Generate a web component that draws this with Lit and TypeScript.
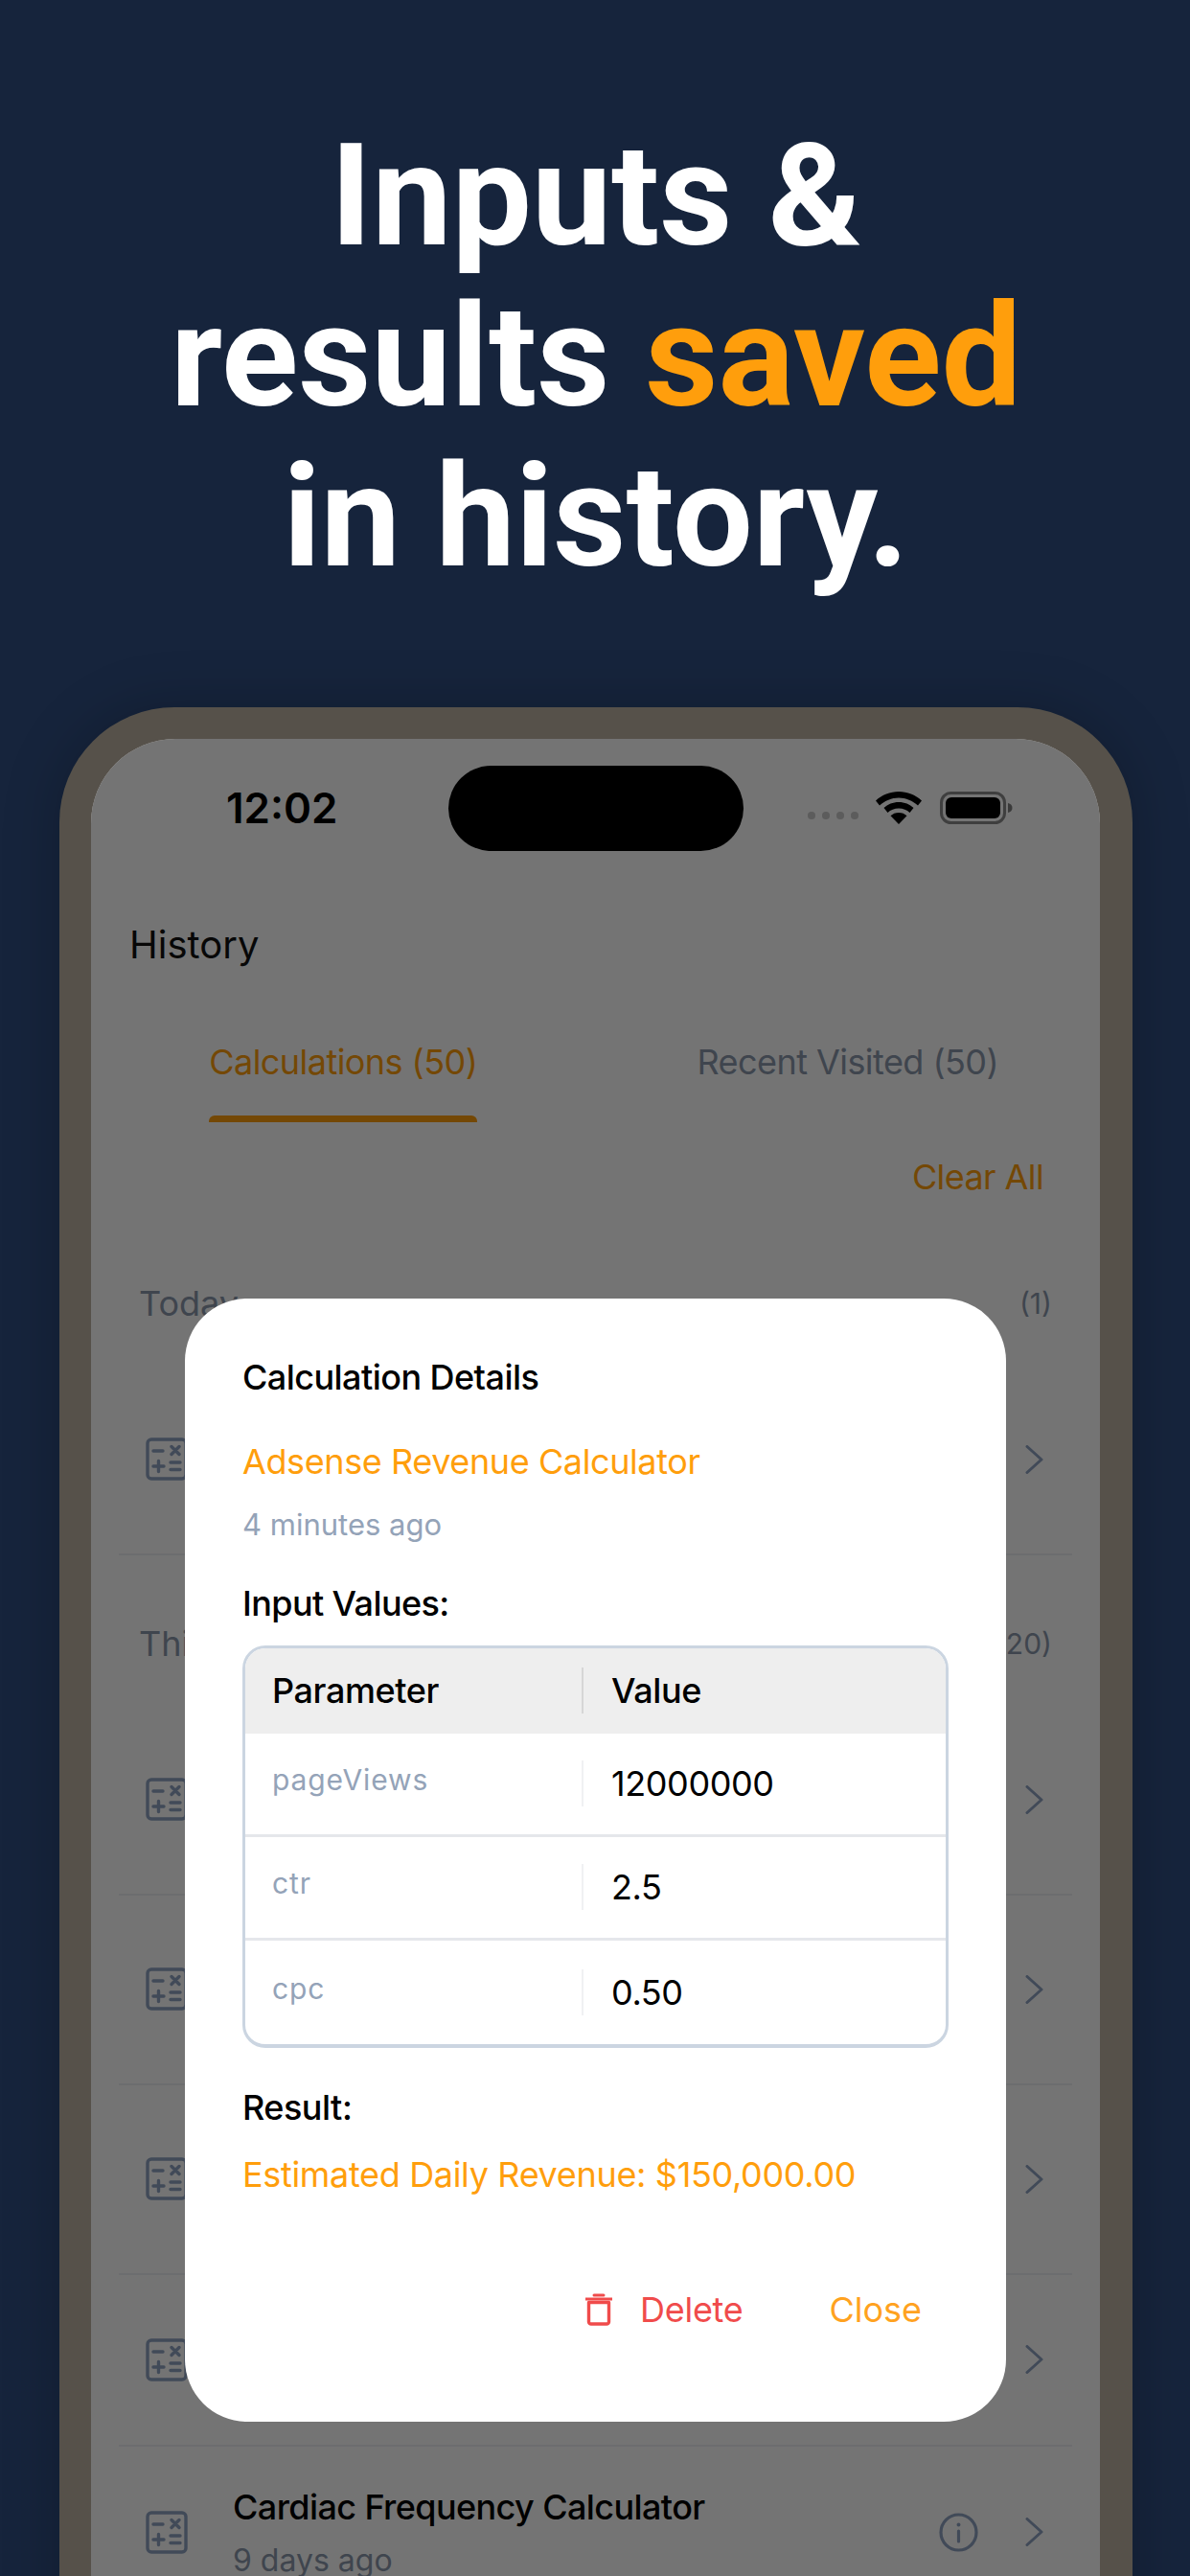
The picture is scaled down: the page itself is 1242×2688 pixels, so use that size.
import { LitElement, html, css, svg } from "lit";
import { customElement } from "lit/decorators.js";

const calcIcon = svg`<svg class="calc" viewBox="0 0 44 45" fill="none" stroke="currentColor" stroke-width="3.4" stroke-linecap="round">
  <rect x="2" y="2" width="40" height="41" rx="4"/>
  <path d="M8 14h10M27 9.500l8 8M35 9.500l-8 8M8 30h11M13.500 24.500v11M26 26h10M26 33.500h10"/>
</svg>`;

const chevron = svg`<svg class="chev" viewBox="0 0 19 30" fill="none" stroke="currentColor" stroke-width="3" stroke-linecap="round" stroke-linejoin="round"><path d="M2 1.500 17 15 2 28.500"/></svg>`;

const info = svg`<svg class="info" viewBox="0 0 41 41" fill="none" stroke="currentColor" stroke-width="3.2" stroke-linecap="round"><circle cx="20.500" cy="20.500" r="18.500"/><path d="M20.500 19v11"/><circle cx="20.500" cy="12.500" r="1.200" fill="currentColor" stroke-width="1.600"/></svg>`;

const trash = svg`<svg class="trash" viewBox="0 0 28 34" fill="none" stroke="currentColor" stroke-width="3.400" stroke-linejoin="round"><path d="M0 6h28" stroke-width="3"/><path d="M9 2h10" stroke-width="3" stroke-linecap="round"/><path d="M3.500 9.500h21V30a2.500 2.500 0 0 1-2.500 2H6a2.500 2.500 0 0 1-2.500-2z"/></svg>`;

interface Row { title: string; time: string; tall: boolean }

@customElement("app-root")
export class AppRoot extends LitElement {
  static styles = css`
    :host { display: block; width: 1242px; height: 2688px; overflow: hidden; background: #16243c; font-family: Inter, "Noto Sans", sans-serif; }
    .headline { margin: 0; padding: 121px 0 114px 2px; text-align: center; font: 700 148.5px/167.6px Roboto, sans-serif; color: #fff; }
    .headline em { font-style: normal; color: #ff9e0c; }
    .phone { position: relative; margin: 0 60px 0 62px; height: 2100px; padding: 33px 34px 0 33px; background: #56514a; border-radius: 120px 120px 0 0; box-shadow: 0 0 60px rgba(0,0,0,.22); }
    .screen { position: relative; height: 100%; background: #fff; border-radius: 88px 88px 0 0; overflow: hidden; color: #000; }
    .scrim { position: absolute; inset: 0; background: rgba(0,0,0,.545); }
    .status { display: grid; grid-template-columns: 1fr 308px 1fr; height: 89px; padding-top: 28px; align-items: center; }
    .time { padding-left: 141px; font-size: 44px; font-weight: 600; color: #000; line-height: 89px; }
    .island { height: 89px; border-radius: 45px; background: #000; position: relative; z-index: 2; }
    .sys { display: flex; align-items: center; padding-left: 67px; position: relative; z-index: 2; }
    .dots { display: flex; gap: 7px; margin: 16px 18px 0 0; }
    .dots i { width: 8px; height: 8px; border-radius: 50%; background: #5c5c5c; }
    .wifi { width: 48px; height: 34px; margin-right: 19px; }
    .batt { width: 76px; height: 34px; }
    .history { padding: 74px 0 0 40px; font-size: 40px; line-height: 48px; color: #111; }
    .tabs { display: grid; grid-template-columns: 1fr 1fr; margin-top: 76px; letter-spacing: -.55px; }
    .tab { justify-self: center; font-size: 36px; line-height: 44px; color: #8c98ab; padding-bottom: 41px; }
    .tab.on { color: #ff9e0c; position: relative; }
    .tab.on::after { content: ""; position: absolute; left: 0; right: 0; bottom: 0; height: 7px; background: #ff9e0c; border-radius: 6px 6px 0 0; }
    .clear { text-align: right; padding: 35px 59px 0 0; font-size: 36px; line-height: 44px; color: #ff9e0c; letter-spacing: -.6px; }
    .sec { display: flex; justify-content: space-between; align-items: center; padding: 0 50px; height: 44px; color: #8c98ab; font-size: 36px; }
    .sec small { font-size: 30px; }
    .sec.first { margin-top: 88px; }
    .sec.next { margin-top: 70px; }
    .rows { margin: 0 29px 0 29px; }
    .rows.first { margin-top: 43px; }
    .rows.next { margin-top: 43px; }
    .row { display: flex; align-items: center; height: 198px; padding: 0 30px 0 28px; border-bottom: 2px solid #eef0f3; box-sizing: border-box; }
    .row.short { height: 179px; }
    .row.plain { border-bottom: 0; }
    .calc { width: 44px; height: 45px; flex: none; color: #8fa2c1; }
    .body { flex: 1; margin-left: 47px; padding-top: 2px; }
    .name { font-size: 36px; line-height: 44px; color: #000; font-weight: 500; margin-bottom: 14px; letter-spacing: -.6px; }
    .ago { font-size: 32px; line-height: 40px; color: #8c98ab; }
    .info { width: 41px; height: 41px; flex: none; margin-right: 49px; color: #8fa2c1; }
    .chev { width: 19px; height: 30px; flex: none; color: #8fa2c1; }
    .modal { position: absolute; left: 131px; top: 617px; width: 857px; height: 1172px; box-sizing: border-box; padding: 60px 60px 0; background: #fff; border-radius: 65px; z-index: 3; }
    .modal h2 { margin: 0; font-size: 36px; font-weight: 500; line-height: 44px; letter-spacing: -.55px; }
    .calcname { margin-top: 44px; font-size: 36px; line-height: 44px; color: #ff9e0c; letter-spacing: -.4px; }
    .modal .when { margin-top: 24px; font-size: 31px; line-height: 40px; color: #94a3b8; }
    .label { margin-top: 40px; font-size: 36px; line-height: 44px; font-weight: 500; letter-spacing: -.6px; }
    .table { margin-top: 22px; width: 737px; box-sizing: border-box; border: 3px solid #cbd5e1; border-bottom-width: 4px; border-radius: 24px; overflow: hidden; }
    .tr { display: grid; grid-template-columns: 351px 1fr; height: 108px; border-bottom: 3px solid #e5e7eb; box-sizing: border-box; align-items: center; }
    .tr:last-child { border-bottom: 0; }
    .tr.head { background: #eeeeee; height: 89px; border-bottom: 0; }
    .th, .td { position: relative; font-size: 36px; line-height: 44px; padding-left: 28px; letter-spacing: -.4px; }
    .th { font-weight: 500; }
    .th:nth-child(2), .td:nth-child(2) { padding-left: 31px; }
    .th:nth-child(2)::before, .td:nth-child(2)::before { content: ""; position: absolute; left: 0; top: -2px; bottom: 0; width: 2px; height: 48px; background: #f0f1f3; }
    .th:nth-child(2)::before { background: #d6d6d6; }
    .td:first-child { font-size: 30px; letter-spacing: .9px; color: #94a3b8; top: -4px; }
    .result { margin-top: 40px; font-size: 36px; line-height: 44px; font-weight: 500; letter-spacing: -.5px; }
    .rvalue { margin-top: 26px; font-size: 36px; line-height: 44px; color: #ff9e0c; letter-spacing: -.33px; }
    .actions { display: flex; justify-content: flex-end; align-items: center; margin-top: 97px; padding-right: 28px; font-size: 36px; line-height: 44px; }
    .del { display: flex; align-items: center; color: #f04b4b; margin-right: 90px; letter-spacing: -.3px; }
    .trash { width: 28px; height: 34px; margin-right: 29px; }
    .close { color: #ffa21f; }
  `;

  private rowView(r: Row, last = false) {
    return html`<div class="row ${r.tall ? "" : "short"} ${last ? "plain" : ""}">
      ${calcIcon}
      <div class="body"><div class="name">${r.title}</div><div class="ago">${r.time}</div></div>
      ${info}${chevron}
    </div>`;
  }

  render() {
    const older: Row[] = [
      { title: "Adsense Revenue Calculator", time: "2 days ago", tall: true },
      { title: "Adsense Revenue Calculator", time: "3 days ago", tall: true },
      { title: "Adsense Revenue Calculator", time: "5 days ago", tall: true },
      { title: "Cardiac Frequency Calculator", time: "8 days ago", tall: false },
      { title: "Cardiac Frequency Calculator", time: "9 days ago", tall: false },
    ];
    return html`
      <h1 class="headline">Inputs &amp;<br />results <em>saved</em><br />in history.</h1>
      <div class="phone">
        <div class="screen">
          <div class="status">
            <div class="time">12:02</div>
            <div class="island"></div>
            <div class="sys">
              <div class="dots"><i></i><i></i><i></i><i></i></div>
              <svg class="wifi" viewBox="0 0 48 34" fill="#000"><path d="M24 0c9 0 17.500 3.500 24 9.500l-4 5C38.500 9.500 31.500 6.500 24 6.500S9.500 9.500 4 14.500l-4-5C6.500 3.500 15 0 24 0z"/><path d="M24 11c6 0 11.500 2.300 15.500 6l-4 5c-3-2.800-7-4.500-11.500-4.500S15.500 19.200 12.500 22l-4-5c4-3.700 9.500-6 15.500-6z"/><path d="M24 22c3.300 0 6.300 1.200 8.500 3.300L24 34l-8.500-8.700C17.700 23.200 20.700 22 24 22z"/></svg>
              <svg class="batt" viewBox="0 0 76 34"><rect x="1.500" y="1.500" width="66" height="31" rx="10" fill="none" stroke="#000" stroke-opacity=".45" stroke-width="3"/><rect x="6" y="6" width="57" height="22" rx="6" fill="#000"/><path d="M71 12c3 .5 4.500 2.500 4.500 5s-1.500 4.500-4.500 5z" fill="#000" fill-opacity=".5"/></svg>
            </div>
          </div>
          <div class="history">History</div>
          <div class="tabs">
            <div class="tab on">Calculations (50)</div>
            <div class="tab">Recent Visited (50)</div>
          </div>
          <div class="clear">Clear All</div>
          <div class="sec first"><span>Today</span><small>(1)</small></div>
          <div class="rows first">${this.rowView({ title: "Adsense Revenue Calculator", time: "4 minutes ago", tall: true })}</div>
          <div class="sec next"><span>This Month</span><small>(20)</small></div>
          <div class="rows next">${older.map((r, i) => this.rowView(r, i === older.length - 1))}</div>
          <div class="scrim"></div>
        </div>
        <div class="modal">
          <h2>Calculation Details</h2>
          <div class="calcname">Adsense Revenue Calculator</div>
          <div class="when">4 minutes ago</div>
          <div class="label">Input Values:</div>
          <div class="table">
            <div class="tr head"><div class="th">Parameter</div><div class="th">Value</div></div>
            <div class="tr"><div class="td">pageViews</div><div class="td">12000000</div></div>
            <div class="tr"><div class="td">ctr</div><div class="td">2.5</div></div>
            <div class="tr"><div class="td">cpc</div><div class="td">0.50</div></div>
          </div>
          <div class="result">Result:</div>
          <div class="rvalue">Estimated Daily Revenue: $150,000.00</div>
          <div class="actions">
            <div class="del">${trash}<span>Delete</span></div>
            <div class="close">Close</div>
          </div>
        </div>
      </div>
    `;
  }
}
